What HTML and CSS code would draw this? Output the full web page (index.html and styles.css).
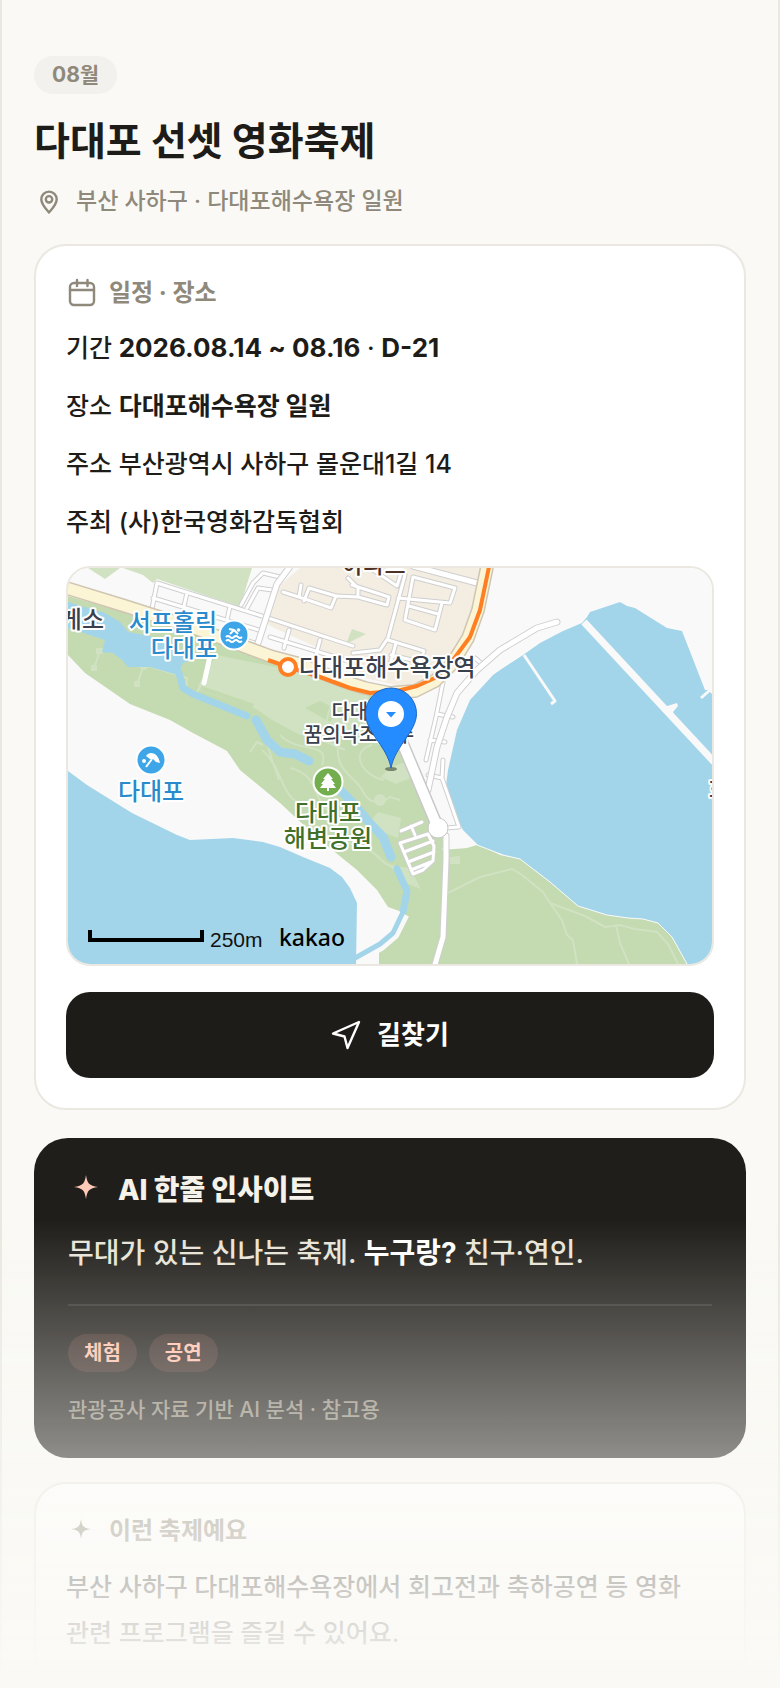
FILE: index.html
```html
<!DOCTYPE html>
<html lang="ko">
<head>
<meta charset="utf-8">
<meta name="viewport" content="width=device-width, initial-scale=1">
<title>다대포 선셋 영화축제</title>
<link rel="stylesheet" href="styles.css">
</head>
<body>
<main class="page">
  <header class="intro">
    <span class="month">08월</span>
    <h1 class="title">다대포 선셋 영화축제</h1>
    <p class="place">
      <svg class="icon" viewBox="0 0 30 30" aria-hidden="true"><path d="M15 26.500C12 23 7.300 18.500 7.300 13.300a7.700 7.700 0 0 1 15.400 0C22.700 18.500 18 23 15 26.500z"/><circle cx="15" cy="13.300" r="3.200"/></svg>
      <span>부산 사하구 · 다대포해수욕장 일원</span>
    </p>
  </header>

  <section class="card">
    <h2 class="card-title">
      <svg class="icon" viewBox="0 0 30 30" aria-hidden="true"><rect x="4" y="5" width="24" height="22" rx="4"/><path d="M4 12h24M11 2v6M21.500 2v6"/></svg>
      <span>일정 · 장소</span>
    </h2>
    <p class="fact">기간 <strong class="dates">2026.08.14 ~ 08.16</strong> · <strong class="dates">D-21</strong></p>
    <p class="fact">장소 <strong>다대포해수욕장 일원</strong></p>
    <p class="fact">주소 부산광역시 사하구 몰운대1길 14</p>
    <p class="fact">주최 (사)한국영화감독협회</p>

    <div class="map">
      <svg class="map-view" viewBox="68 568 644 396" preserveAspectRatio="xMidYMid slice" role="img" aria-label="다대포해수욕장 지도">
        <defs>
          <g id="minor-roads">
            <path d="M150 619L157 583L265 617L353 646M153 598L262 631M152 612L258 644M187 593L184 606M230 606L227 620M270 637L345 660M289 630L284 648M320 640L316 655"/>
            <path d="M241 605L253 583L263 573L280 577M247 608L258 588L272 590M283 592L305 599L331 608L336 596L309 588L304 601M301 585L299 597M348 578L358 588L358 597L387 605L389 597L352 585M370 568L397 586L402 570M337 596L358 597"/>
            <path d="M405 575L388 638L380 650L353 653M413 577L455 588L450 603L398 598M413 577L405 620L435 630L442 603M409 606L438 614M388 640L424 651L420 662M396 643L390 665M391 655L420 662"/>
            <path d="M443 682L436 717L426 760M437 714L453 717M430 740L445 742M443 760L442 778L459 827L446 828M442 778L428 775M475 658L482 664"/>
          </g>
          <g id="park-roads">
            <path d="M401 831L422 822M411 826L415 835M400 843L428 834L434 846L433 861L423 870L413 874Z M404 852L433 841M408 862L434 852M411 870L431 862M428 834L435 832"/>
          </g>
        </defs>
        <rect class="land" x="68" y="568" width="644" height="396"/>
        <path class="block" d="M300 568H487L473 618L455 650L430 677L405 687L360 677L340 658L270 626L262 617L280 585Z"/>
        <path class="lawn" d="M88 568H120L105 579ZM123 568H252L240 607L157 579L153 583L143 575ZM352 629L366 634L346 644Z"/>
        <path class="park" d="M68 596L130 614L210 640L300 668L375 694L386 742L403 745L437 825L448 830L442 850L467 848L477 845L487 848L500 855L520 859L550 882L578 906L607 915L628 918L643 919L658 923L672 937L687 964H379V948L393 940L402 920L405 913L388 907L377 890L357 870L320 840L280 803L240 770L227 751L193 733L170 720L130 704L85 673L68 655Z"/>
        <path class="lawn" d="M217 655L300 672L368 694L374 740L330 730L300 735L272 720L256 709L198 690L208 668Z"/>
        <path class="park" d="M200 690L252 708L254 704L202 686ZM305 708L320 701L340 711L330 722ZM275 724L300 739L292 751Z"/>
        <path class="lawn" d="M389 768L405 762L411 778L396 784L381 777ZM366 826L378 812L401 818L398 838ZM388 865L410 868L421 889L408 884ZM450 857L460 856L460 864L450 864Z"/>
        <g class="trail">
          <path d="M100 651L94 668M144 665L137 684M148 666L178 675L187 678L186 690L197 693L202 680M254 718L264 733L272 760L279 780M250 752L257 742L263 745M262 750C285 770 280 800 305 805S330 840 355 845S380 866 394 866M290 768C320 775 312 800 330 812M340 737C330 770 355 775 362 790S380 804 390 797L400 800M372 745C350 750 360 775 384 780M410 768L430 812M280 735C300 755 330 740 322 765M295 720L350 735M333 695L322 740L345 750"/>
          <path d="M448 893L480 877L512 869L522 875L543 892L550 903L562 920L567 935L573 940L577 964M550 903L585 916L605 927L620 925L635 929L657 932L668 944L678 964M616 926L620 943L629 964"/>
        </g>
        <g class="lawn"><circle cx="144" cy="665" r="5"/><circle cx="380" cy="800" r="6"/><path d="M96 648h7v6h-7zM91 665h6v6h-6zM134 681h6v6h-6z"/></g>

        <path class="water" d="M68 602L105 613L120 622L128 632L150 636L198 658L183 663L178 675L150 667L138 667L128 667L122 660L113 653L102 652L105 640L68 628Z"/>
        <path class="stream" d="M179 673L183 688L193 694L247 716"/>
        <path class="stream wide" d="M256 720L267 740L280 752L295 754L309 761"/>
        <path class="stream wide" d="M340 790L352 802L367 820L383 837L391 857"/>
        <path class="stream" d="M397 869L407 891L403 912"/>
        <path class="shore" d="M404 914L394 934L380 946L350 963"/>
        <path class="stream thin" d="M403 912L393 933L380 944L348 962"/>
        <path class="water" d="M68 771L87 785L132 813L177 835L190 840L233 838L263 842L280 847L303 857L330 868L342 877L350 888L357 903L356 964H68Z"/>
        <path class="water" d="M712 694L708 690L705 690L682 631L667 628L635 608L627 606L620 602L590 612L587 617L582 623L563 631L540 643L523 655L500 670L493 675L470 700L457 730L448 770L445 793L452 810L463 830L478 845L503 855L520 859L550 882L578 906L607 915L628 918L643 919L658 923L672 937L687 964H712Z"/>
        <path class="coast" d="M477 845L503 855L520 859L550 882L578 906L607 915L628 918L643 919L658 923L672 937L687 964"/>
        <path class="pier" d="M584 622L716 764"/>
        <path class="pier-small" d="M524 655L555 701L551 704M701 698L710 690"/>
        <path class="land" d="M664 707L677 703L678 706L673 712L675 718Z"/>

        <use href="#minor-roads" class="road-edge"/>
        <use href="#minor-roads" class="road-fill"/>
        <g class="road-edge avenue"><path d="M257 646L277 584L289 568M413 566L477 583M446 836L446 860L443 937L434 968"/></g>
        <g class="road-fill avenue"><path d="M257 646L277 584L289 568M413 566L477 583M446 836L446 860L443 937L434 968M210 656L204 683"/></g>
        <g class="road-edge avenue"><path d="M557 622L537 628L500 650L477 670L457 693L447 717L437 747L428 790"/></g>
        <g class="road-fill avenue"><path d="M557 622L537 628L500 650L477 670L457 693L447 717L437 747L428 790"/></g>
        <use href="#park-roads" class="road-edge"/>
        <use href="#park-roads" class="road-fill"/>
        <path class="main-edge" d="M399 735L438 828"/><circle class="roundabout" cx="438" cy="828" r="10"/><path class="main-fill" d="M399 735L438 828"/>

        <path class="highway-edge" d="M60 586L125 606L200 630L270 656L300 664L340 680L365 688L390 693L415 691L435 681L452 664L468 638L478 610L488 562"/>
        <path class="highway" d="M60 586L125 606L200 630L270 656L300 664L340 680L365 688L390 693L415 691L435 681L452 664L468 638L478 610L488 562"/>
        <path class="subway" d="M268 660L288 667L320 677L350 688L370 693L397 691L417 686L437 677L453 660L470 637L480 610L490 562"/>
        <circle class="station" cx="288" cy="667" r="8"/>

        <g class="label dark">
          <text x="104" y="628" text-anchor="end">휴게소</text>
          <text x="299" y="676">다대포해수욕장역</text>
          <text x="709" y="799">화</text>
        </g>
        <g class="label brown" text-anchor="middle"><text x="374" y="573">아파트</text></g>
        <g class="label small dark" text-anchor="middle">
          <text x="359" y="719">다대포</text>
          <text x="359" y="742">꿈의낙조분수</text>
        </g>
        <g class="label blue">
          <text x="217" y="631" text-anchor="end">서프홀릭</text>
          <text x="217" y="657" text-anchor="end">다대포</text>
          <text x="151" y="800" text-anchor="middle">다대포</text>
        </g>
        <g class="label green" text-anchor="middle">
          <text x="328" y="821">다대포</text>
          <text x="328" y="847">해변공원</text>
        </g>

        <g class="poi sea"><circle cx="234" cy="635" r="14.500"/><path class="poi-line" d="M226 637q2-2 4 0t4 0t4 0t4 0M226 641q2-2 4 0t4 0t4 0t4 0"/><path class="poi-line" d="M229 629l5 1l4 4M234 630l-4 4"/><circle class="poi-fill" cx="238.500" cy="630" r="1.800"/></g>
        <g class="poi sea"><circle cx="151" cy="760" r="14.500"/><path class="poi-fill" d="M146 756c3-5 12-4 14 7l-4-1l-3-3l-3 0z"/><path class="poi-line" d="M152 759l-6 8"/><circle class="poi-fill" cx="144" cy="761" r="2"/></g>
        <g class="poi tree"><circle cx="328" cy="782" r="14.500"/><path class="poi-fill" d="M328 773l5 6h-2l4 5h-2l3 4h-7v3h-2v-3h-7l3-4h-2l4-5h-2z"/></g>

        <ellipse class="pin-shadow" cx="391" cy="769" rx="6" ry="2"/>
        <path class="pin" d="M391 768C387 746 365.500 732 365.500 713.500a25.500 25.500 0 0 1 51 0C416.500 732 395 746 391 768z"/>
        <circle class="poi-fill" cx="391" cy="714" r="13"/>
        <path class="pin-arrow" d="M386 712h10l-5 5.500z"/>

        <path class="scale" d="M90 930V940H202V930"/>
        <text class="scale-text" x="210" y="947">250m</text>
        <text class="brand" x="279" y="946">kakao</text>
      </svg>
    </div>

    <button class="route" type="button">
      <svg class="icon" viewBox="0 0 30 30" aria-hidden="true"><path d="M28 2L2 13.500L13.500 16.500L16.500 28Z"/></svg>
      <span>길찾기</span>
    </button>
  </section>

  <section class="insight">
    <h2 class="insight-title">
      <svg class="spark" viewBox="0 0 36 36" aria-hidden="true"><path d="M18 3c1.300 8.500 3 10.700 12 12c-9 1.300-10.700 3.500-12 12c-1.300-8.500-3-10.700-12-12c9-1.300 10.700-3.500 12-12z"/></svg>
      <span>AI 한줄 인사이트</span>
    </h2>
    <p class="insight-text">무대가 있는 신나는 축제. <strong>누구랑?</strong> 친구·연인.</p>
    <ul class="tags">
      <li class="tag">체험</li>
      <li class="tag">공연</li>
    </ul>
    <p class="source">관광공사 자료 기반 AI 분석 · 참고용</p>
  </section>

  <section class="card about">
    <h2 class="card-title">
      <svg class="icon solid" viewBox="0 0 30 30" aria-hidden="true"><path d="M15 3c1 7.500 2.500 9 10 10c-7.500 1-9 2.500-10 10c-1-7.500-2.500-9-10-10c7.500-1 9-2.500 10-10z"/></svg>
      <span>이런 축제예요</span>
    </h2>
    <p class="about-text">부산 사하구 다대포해수욕장에서 회고전과 축하공연 등 영화 관련 프로그램을 즐길 수 있어요.</p>
  </section>
</main>
<div class="fade" aria-hidden="true"></div>
</body>
</html>
```
FILE: styles.css
```css
* { box-sizing: border-box; }

body,
h1, h2, p, ul {
  margin: 0;
  padding: 0;
}

body {
  background: #faf9f5;
  color: #1e1c18;
  font-family: Inter, "Noto Sans CJK KR", sans-serif;
  font-size: 25px;
  font-weight: 500;
  word-break: keep-all;
}

.page {
  min-height: 100vh;
  padding: 56px 32px 2px;
  border: solid #eae8e0;
  border-width: 0 2px;
}

.icon {
  flex: none;
  width: 30px;
  height: 30px;
  fill: none;
  stroke: currentColor;
  stroke-width: 2.4;
  stroke-linecap: round;
  stroke-linejoin: round;
}

.icon.solid {
  fill: currentColor;
  stroke: none;
}

/* Intro */
.intro { padding-bottom: 26px; }

.month {
  display: block;
  width: fit-content;
  padding: 0 18px;
  border-radius: 19px;
  background: #f2f1ed;
  color: #8f897b;
  font-size: 21px;
  font-weight: 700;
  line-height: 38px;
}

.title {
  margin-top: 23px;
  font-size: 39px;
  font-weight: 700;
  line-height: 48px;
}

.place {
  display: flex;
  align-items: center;
  gap: 12px;
  margin-top: 19px;
  color: #8f897b;
  font-size: 23px;
  line-height: 34px;
}

/* Cards */
.card {
  display: flex;
  flex-direction: column;
  gap: 18px;
  padding: 30px;
  border: 2px solid #eae8e0;
  border-radius: 32px;
  background: #fff;
}

.card-title {
  display: flex;
  align-items: center;
  gap: 13px;
  color: #8f897b;
  font-size: 24px;
  font-weight: 700;
  line-height: 34px;
}

.fact { line-height: 40px; }

.fact strong { font-weight: 700; }

.fact .dates { font-size: 26px; }

.map {
  margin-top: 6px;
  overflow: hidden;
  border: 2px solid #eae8e0;
  border-radius: 24px;
}

.map-view {
  display: block;
  width: 100%;
}

.route {
  display: flex;
  align-items: center;
  justify-content: center;
  gap: 16px;
  margin-top: 8px;
  padding: 24px;
  border: 0;
  border-radius: 24px;
  background: #1e1c18;
  color: #fff;
  font: inherit;
  font-size: 26px;
  font-weight: 700;
  line-height: 38px;
}

/* Map drawing */
.land { fill: #f9f9f9; }
.block { fill: #f3ede2; }
.park { fill: #c4dab0; }
.lawn { fill: #d0e2c2; }
.water { fill: #a3d5ea; }

.trail,
.stream,
.shore,
.coast,
.pier,
.pier-small,
.road-edge,
.road-fill,
.main-edge,
.main-fill,
.highway,
.highway-edge,
.subway,
.scale {
  fill: none;
  stroke-linejoin: round;
}

.trail { stroke: #d0e2c2; stroke-width: 2; }
.stream { stroke: #a3d5ea; stroke-width: 7; stroke-linecap: round; }
.stream.wide { stroke-width: 9; }
.stream.thin { stroke-width: 5; }
.shore { stroke: #f9f9f9; stroke-width: 11; }
.coast { stroke: #f9f9f9; stroke-width: 1; }
.pier { stroke: #f9f9f9; stroke-width: 7; }
.pier-small { stroke: #f9f9f9; stroke-width: 3; }
.road-edge { stroke: #cfcfcf; stroke-width: 5; stroke-linecap: round; }
.road-fill { stroke: #fff; stroke-width: 3; stroke-linecap: round; }
.road-edge.avenue { stroke-width: 7; }
.road-fill.avenue { stroke-width: 5; }
.main-edge { stroke: #c8c8c8; stroke-width: 13; }
.main-fill { stroke: #fff; stroke-width: 10; }
.roundabout { fill: #fff; stroke: #c8c8c8; stroke-width: 1; }
.highway-edge { stroke: #cfc5b2; stroke-width: 14; }
.highway { stroke: #fbf5d6; stroke-width: 11; }
.subway { stroke: #ff7f22; stroke-width: 4; }
.station { fill: #fff; stroke: #ff7f22; stroke-width: 4; }

.label {
  font-size: 24px;
  font-weight: 500;
  paint-order: stroke;
  stroke: #fff;
  stroke-width: 4;
  stroke-linejoin: round;
}

.label.small { font-size: 20px; }
.label.dark { fill: #3a414d; }
.label.brown { fill: #4f3024; font-size: 23px; }
.label.blue { fill: #2a8bcc; }
.label.green { fill: #41702a; }

.poi { stroke: #fff; stroke-width: 2; }
.poi.sea { fill: #3da5e8; }
.poi.tree { fill: #72ae4e; }
.poi-fill { fill: #fff; stroke: none; }
.poi-line { fill: none; }

.pin { fill: #258cff; stroke: #1d66c4; stroke-width: 1; }
.pin-arrow { fill: #258cff; }
.pin-shadow { fill: #4f6048; opacity: 0.7; }

.scale { stroke: #000; stroke-width: 4; stroke-linejoin: miter; }
.scale-text { fill: #111; font: 21px "Liberation Sans", sans-serif; }
.brand { fill: #000; font: 500 23px "Noto Sans", sans-serif; }

/* Insight */
.insight {
  margin-top: 28px;
  padding: 34px;
  border-radius: 34px;
  background: #201e1a;
}

.insight-title {
  display: flex;
  align-items: center;
  gap: 14px;
  color: #f5f2ea;
  font-size: 28px;
  font-weight: 800;
  line-height: 36px;
}

.spark {
  flex: none;
  width: 36px;
  height: 36px;
  fill: #ffc9b8;
}

.insight-text {
  margin-top: 22px;
  padding-bottom: 28px;
  border-bottom: 2px solid rgba(255, 255, 255, 0.1);
  color: #e8e4d8;
  font-size: 28px;
  line-height: 46px;
}

.insight-text strong {
  color: #fff;
  font-weight: 700;
}

.tags {
  display: flex;
  gap: 12px;
  margin-top: 28px;
  list-style: none;
}

.tag {
  padding: 0 16px;
  border-radius: 19px;
  background: rgba(255, 150, 130, 0.13);
  color: #ffc0aa;
  font-size: 20px;
  font-weight: 700;
  line-height: 38px;
}

.source {
  margin-top: 24px;
  color: #8f897b;
  font-size: 21px;
  line-height: 28px;
}

/* About */
.about {
  gap: 16px;
  margin-top: 24px;
  padding-bottom: 26px;
}

.about-text { line-height: 46px; }

.fade {
  position: fixed;
  inset: auto 0 0;
  height: 470px;
  background: linear-gradient(rgba(250, 249, 245, 0), #faf9f5);
  pointer-events: none;
}
```
